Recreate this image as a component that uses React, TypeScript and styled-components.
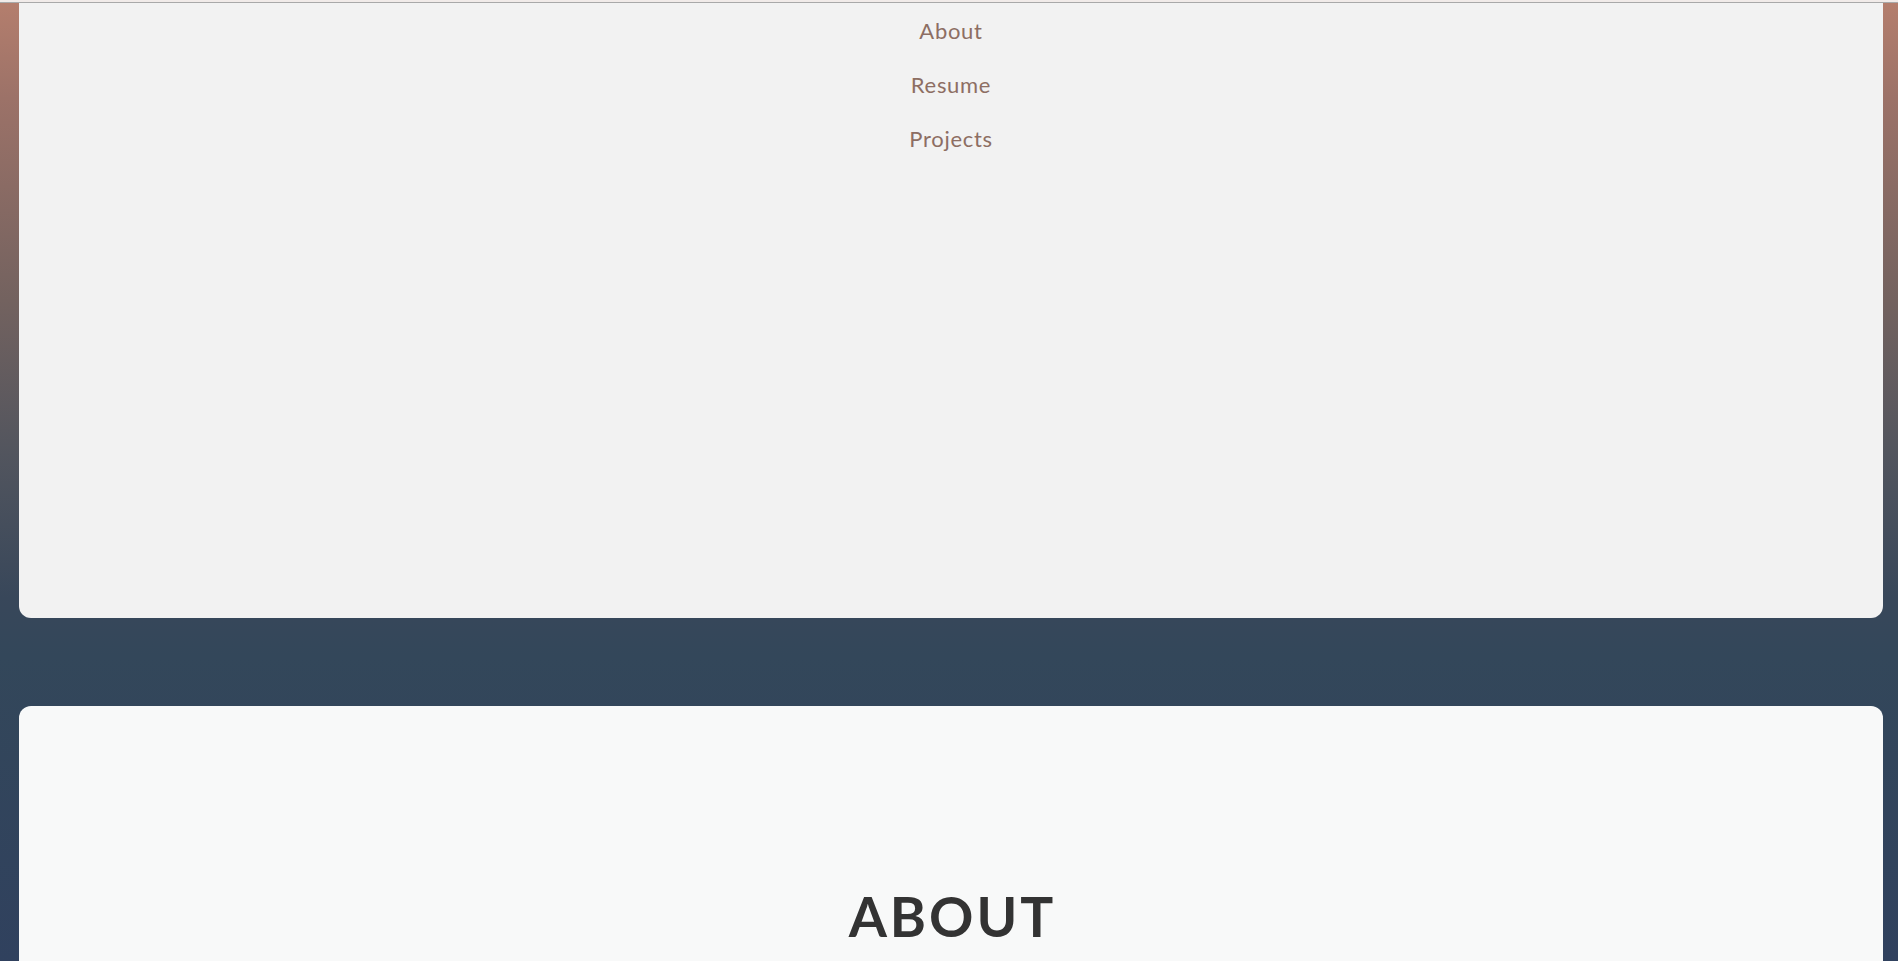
import { createGlobalStyle, styled } from "styled-components";

const GlobalStyle = createGlobalStyle`
  html, body {
    margin: 0;
    padding: 0;
    height: 100%;
    overflow: hidden;
  }
  body {
    font-family: "Lato", "Open Sans", sans-serif;
  }
`;

const Page = styled.div`
  height: 961px;
  overflow: hidden;
  border-top: 2px solid #f1ebe9;
  background: linear-gradient(
    to bottom,
    #b47e6d 0%,
    #9c7268 10%,
    #73625f 31%,
    #52555e 47%,
    #38475a 62%,
    #33475a 68%,
    #30415e 100%
  );
`;

const TopRule = styled.div`
  height: 1px;
  background: #a9a9a9;
`;

const Main = styled.main`
  display: flex;
  flex-direction: column;
  gap: 88px;
  padding: 0 15px 0 19px;
`;

const Card = styled.section<{ $top?: boolean }>`
  background: ${(p) => (p.$top ? "#f2f2f2" : "#f8f9f9")};
  border-radius: ${(p) => (p.$top ? "0 0 12px 12px" : "12px 12px 0 0")};
`;

const NavCard = styled(Card)`
  height: 615px;
`;

const NavList = styled.nav`
  display: flex;
  flex-direction: column;
  align-items: center;
  padding-top: 1px;
`;

const NavLink = styled.a`
  display: block;
  font-family: "Lato", "Open Sans", sans-serif;
  font-size: 22px;
  line-height: 54px;
  color: #8d6e63;
  text-decoration: none;
  letter-spacing: 0.7px;
  cursor: pointer;
`;

const AboutCard = styled(Card)`
  height: 400px;
  display: flex;
  justify-content: center;
  padding-top: 177px;
`;

const Heading = styled.h1`
  margin: 0;
  font-family: "Lato", "DejaVu Sans", sans-serif;
  font-weight: 700;
  font-size: 55px;
  line-height: 67px;
  letter-spacing: 3px;
  color: #333333;
  padding-left: 3px;
`;

export default function App() {
  return (
    <Page>
      <GlobalStyle />
      <TopRule />
      <Main>
        <NavCard $top>
          <NavList>
            <NavLink>About</NavLink>
            <NavLink>Resume</NavLink>
            <NavLink>Projects</NavLink>
          </NavList>
        </NavCard>
        <AboutCard>
          <Heading>ABOUT</Heading>
        </AboutCard>
      </Main>
    </Page>
  );
}
